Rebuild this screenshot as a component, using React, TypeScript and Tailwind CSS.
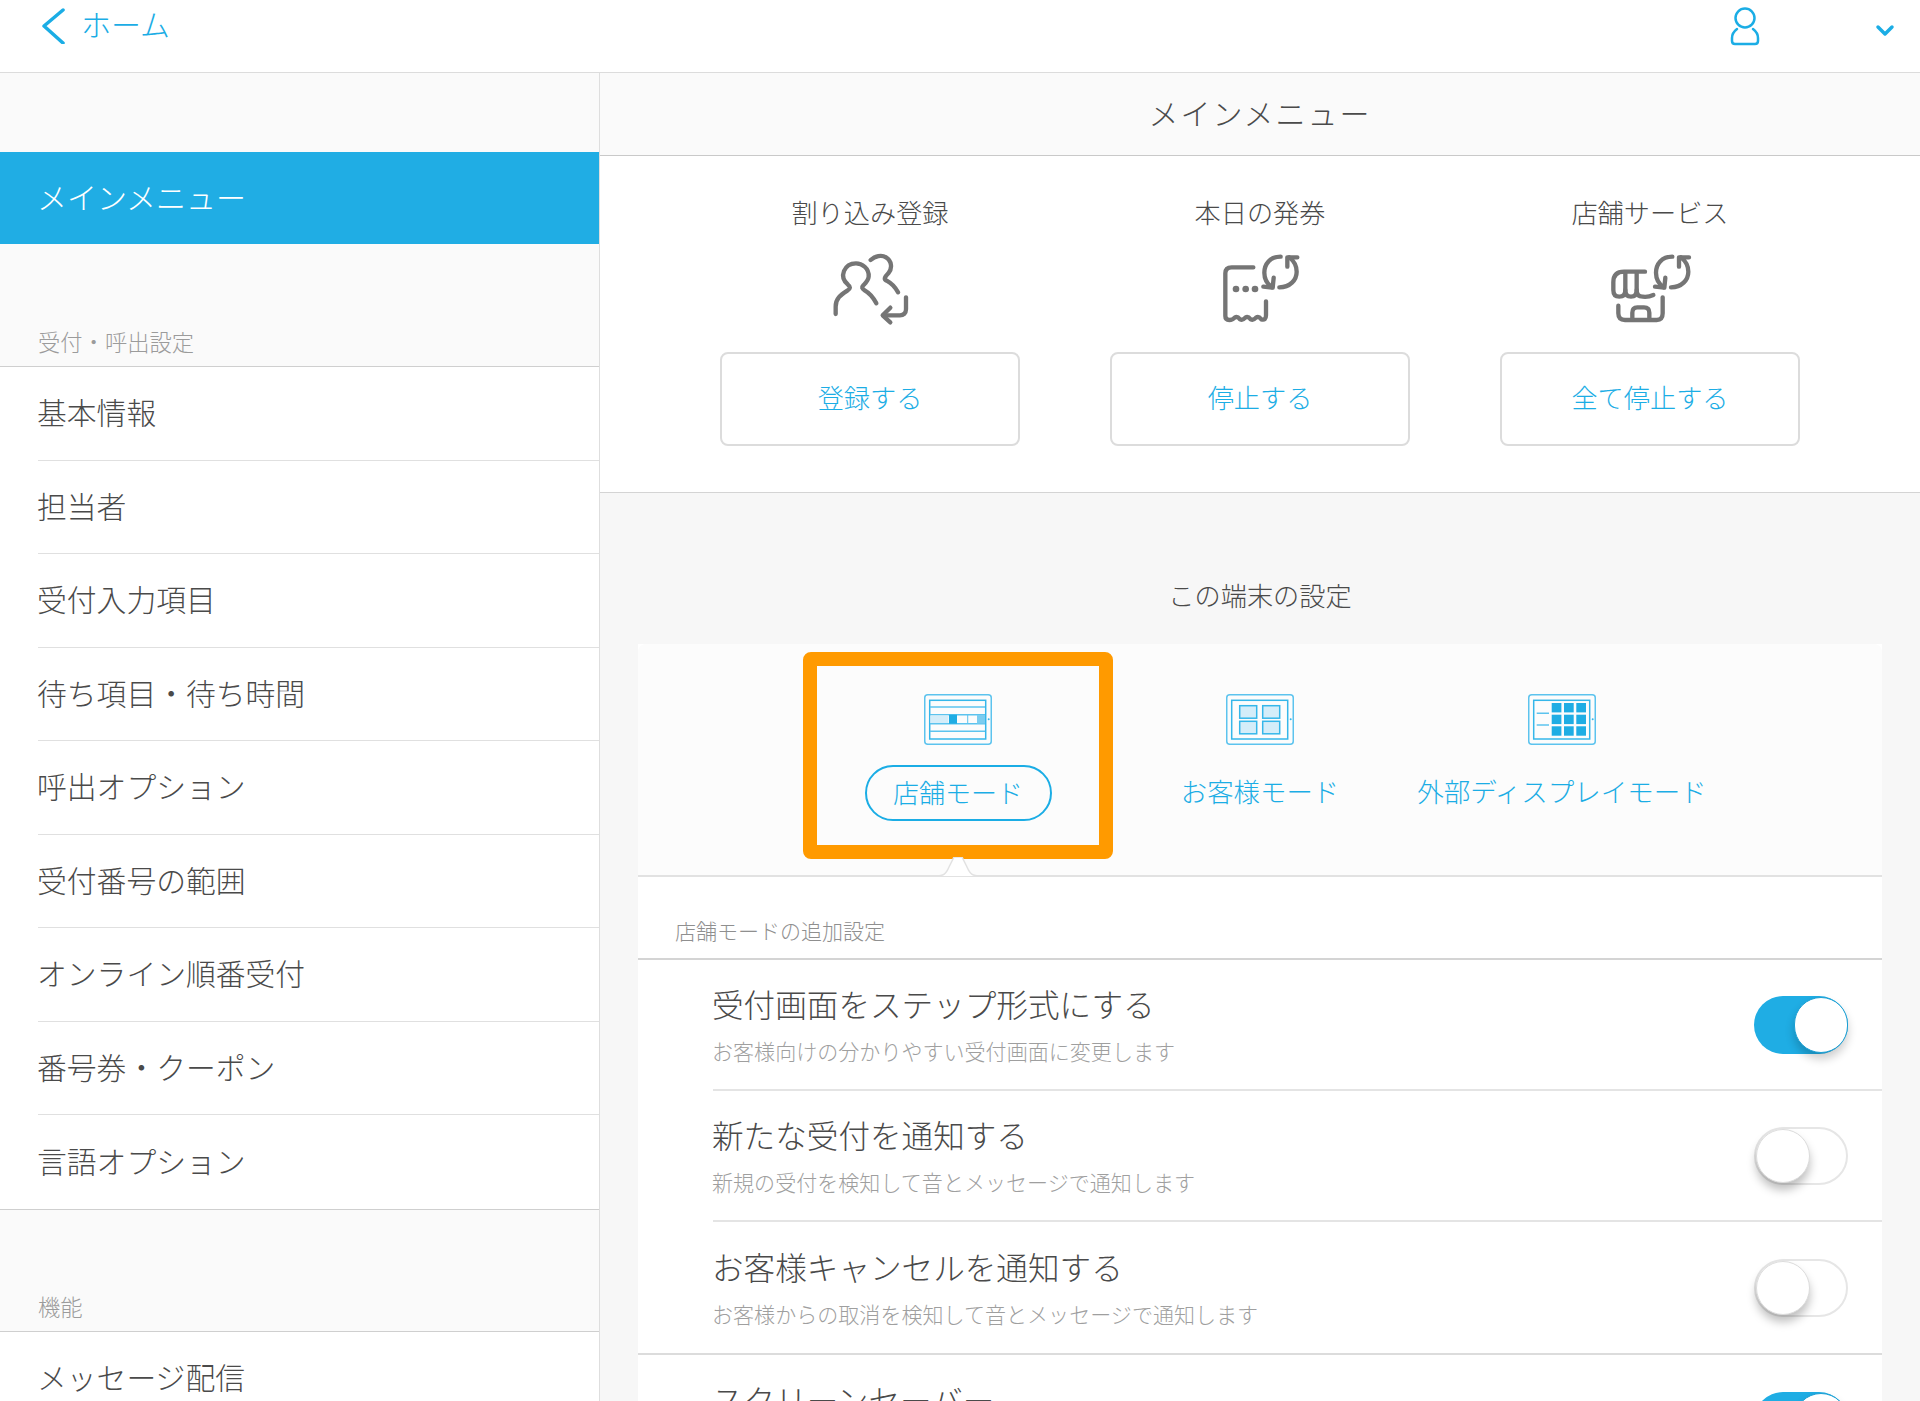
import React from "react";

const sideItems = ["基本情報", "担当者", "受付入力項目", "待ち項目・待ち時間", "呼出オプション", "受付番号の範囲", "オンライン順番受付", "番号券・クーポン", "言語オプション"];

const settings = [
  { title: "受付画面をステップ形式にする", sub: "お客様向けの分かりやすい受付画面に変更します", on: true },
  { title: "新たな受付を通知する", sub: "新規の受付を検知して音とメッセージで通知します", on: false },
  { title: "お客様キャンセルを通知する", sub: "お客様からの取消を検知して音とメッセージで通知します", on: false },
  { title: "スクリーンセーバー", sub: "", on: true },
];

const Refresh = ({ dx = 0 }: { dx?: number }) => (
  <g transform={`translate(${dx} 0)`}>
    <path d="M212 50 C180 50 163 72 163 98 C163 115 172 132 186 142" />
    <path d="M191 113 L188 143 L160 140" />
    <path d="M208 142 C240 142 260 120 260 95 C260 78 252 63 238 52" />
    <path d="M232 80 L232 52 L262 52" />
  </g>
);

const PeopleIcon = () => (
  <svg width="120" height="100" viewBox="-30 0 360 300" fill="none" stroke="#757575" strokeWidth="13" strokeLinecap="round" strokeLinejoin="round">
    <path d="M47 222 V200 C47 175 62 165 82 152 C92 146 92 140 84 134 C70 122 66 108 72 93 C80 74 96 70 108 70 C125 70 148 84 146 110 C145 122 138 128 130 136 C124 142 126 146 134 151 C150 160 160 172 169 190" />
    <path d="M152 60 C165 48 185 44 198 52 C215 62 218 85 205 100 C195 110 190 118 200 122 C215 130 226 142 234 157" />
    <path d="M258 172 V208 C258 220 250 226 240 226 H190" />
    <path d="M211 203 L188 226 L211 247" />
  </svg>
);

const TicketIcon = () => (
  <svg width="120" height="100" viewBox="-30 0 360 300" fill="none" stroke="#757575" strokeWidth="13" strokeLinecap="round" strokeLinejoin="round">
    <path d="M130 82 H65 Q46 82 46 100 V228 Q46 240 58 240 Q68 240 74 233 Q82 228 90 238 Q98 242 106 233 Q114 228 122 238 Q130 242 138 233 Q146 228 154 238 Q168 242 168 226 V184" />
    <circle cx="78" cy="147" r="10" fill="#757575" stroke="none" />
    <circle cx="107" cy="147" r="10" fill="#757575" stroke="none" />
    <circle cx="135" cy="147" r="10" fill="#757575" stroke="none" />
    <Refresh />
  </svg>
);

const StoreIcon = () => (
  <svg width="120" height="100" viewBox="-30 0 360 300" fill="none" stroke="#757575" strokeWidth="13" strokeLinecap="round" strokeLinejoin="round">
    <path d="M135 95 H72 Q40 95 40 127 V150 Q40 170 58 170 Q76 170 76 150 V100" />
    <path d="M76 150 Q76 170 93 170 Q110 170 110 150 V100" />
    <path d="M110 150 Q110 170 128 170 Q145 172 160 165" />
    <path d="M55 197 V220 Q55 240 75 240 H170 Q188 240 188 220 V172" />
    <path d="M97 238 V218 Q97 202 112 202 H132 Q148 202 148 218 V238" />
    <Refresh dx={5} />
  </svg>
);

const Tablet = ({ children }: { children: React.ReactNode }) => (
  <svg width="68" height="51" viewBox="0 0 68 51" fill="none" stroke="#35b7ea" strokeWidth="1.5">
    <rect x="0.75" y="0.75" width="66.5" height="49.5" rx="3" stroke="#5cc3ee" />
    <rect x="5.7" y="6.3" width="56" height="38.7" />
    <circle cx="64.7" cy="25.3" r="1" fill="#35b7ea" stroke="none" />
    {children}
  </svg>
);

const StoreTablet = () => (
  <Tablet>
    <path d="M6 13 H61 M6 20.7 H61 M6 29.7 H61 M6 37.3 H61" stroke="#5cc3ee" />
    <rect x="6.4" y="21.4" width="18" height="7.6" fill="#d4edf9" stroke="none" />
    <rect x="25" y="20.7" width="8" height="9" fill="#1fade4" stroke="none" />
    <rect x="43.2" y="20.7" width="1" height="9" fill="#5cc3ee" stroke="none" />
    <rect x="53" y="21" width="8" height="8.5" fill="#7bcdf0" stroke="none" />
  </Tablet>
);

const GuestTablet = () => (
  <Tablet>
    {[[13.7, 11.7], [36.7, 11.7], [13.7, 27.3], [36.7, 27.3]].map(([x, y]) => (
      <rect key={`${x}-${y}`} x={x} y={y} width={17} height={12.5} fill="#d4edf9" />
    ))}
  </Tablet>
);

const DisplayTablet = () => (
  <Tablet>
    <path d="M8.7 19.3 H21 M8.7 31 H21" stroke="#5cc3ee" />
    {[9, 20.7, 32.3].map((y) =>
      [23.7, 36, 48.3].map((x) => <rect key={`${x}-${y}`} x={x} y={y} width={9.7} height={9.4} fill="#1fade4" stroke="none" />),
    )}
  </Tablet>
);

const Toggle = ({ on }: { on: boolean }) =>
  on ? (
    <div className="flex h-[58px] w-[94px] shrink-0 items-center justify-end rounded-full bg-[#1fade4]">
      <div className="h-[56px] w-[54px] rounded-full border border-[#1a9fd4] bg-white shadow-[0_6px_10px_rgba(0,0,0,0.2)]" />
    </div>
  ) : (
    <div className="flex h-[58px] w-[94px] shrink-0 items-center justify-start rounded-full border-2 border-[#e6e6e6] bg-white">
      <div className="h-[54px] w-[54px] rounded-full border border-[#dcdcdc] bg-white shadow-[0_7px_10px_rgba(0,0,0,0.25)]" />
    </div>
  );

const SectionLabel = ({ children, h }: { children: string; h: string }) => (
  <div className={`flex ${h} items-end border-b border-[#cfcfcf] pb-[9px] pl-[38px] text-[22.3px] leading-[32px] text-[#9b9b9b]`}>{children}</div>
);

const SideItem = ({ children, last }: { children: string; last?: boolean }) => (
  <div className={`ml-[38px] flex h-[93.5px] items-center pb-[3px] -indent-px text-[29.8px] text-[#4a4a4a] ${last ? "" : "border-b border-[#e0e0e0]"}`}>{children}</div>
);

const actions = [
  { label: "割り込み登録", button: "登録する", icon: <PeopleIcon /> },
  { label: "本日の発券", button: "停止する", icon: <TicketIcon /> },
  { label: "店舗サービス", button: "全て停止する", icon: <StoreIcon /> },
];

export default function App() {
  return (
    <div className="h-[1401px] w-[1920px] overflow-hidden bg-white font-['Noto_Sans_CJK_JP','Noto_Sans',sans-serif] font-light">
      {/* Top bar */}
      <header className="flex h-[73px] items-start justify-between border-b border-[#dcdcdc] bg-white text-[#1badE5]">
        <div className="flex items-start pl-[42px] pt-[8px]">
          <svg width="24" height="36" viewBox="0 0 24 36" fill="none" stroke="#1badE5" strokeWidth="3.5" strokeLinecap="round" strokeLinejoin="round">
            <path d="M21 2 L2 18 L21 35" />
          </svg>
          <span className="-mt-[3px] ml-[15px] text-[30px] leading-[36px]">ホーム</span>
        </div>
        <div className="flex items-start pr-[24px] pt-[6px]">
          <svg width="30" height="40" viewBox="0 0 30 40" fill="none" stroke="#1badE5" strokeWidth="2.5" strokeLinecap="round">
            <circle cx="15" cy="12" r="9.5" />
            <path d="M7 23 C3 26 2 29 2 32 V35 Q2 38 5 38 H25 Q28 38 28 35 V32 C28 29 27 26 23 23" />
          </svg>
          <svg className="ml-[114px] mt-[18px]" width="22" height="14" viewBox="0 0 22 14" fill="none" stroke="#1badE5" strokeWidth="3.5" strokeLinecap="round" strokeLinejoin="round">
            <path d="M4 3 L11 10 L18 3" />
          </svg>
        </div>
      </header>

      <div className="flex">
        {/* Sidebar */}
        <aside className="w-[600px] shrink-0 border-r border-[#dedede] bg-[#fafafa]">
          <div className="h-[78.5px]" />
          <div className="flex h-[92px] items-center bg-[#20ade4] pb-[3px] pl-[37px] text-[30px] text-white">メインメニュー</div>
          <SectionLabel h="h-[123.5px]">受付・呼出設定</SectionLabel>
          <div className="border-b border-[#cfcfcf] bg-white">
            {sideItems.map((item, i) => (
              <SideItem key={item} last={i === sideItems.length - 1}>{item}</SideItem>
            ))}
          </div>
          <SectionLabel h="h-[122px]">機能</SectionLabel>
          <div className="bg-white">
            <SideItem last>メッセージ配信</SideItem>
          </div>
        </aside>

        {/* Main */}
        <main className="flex-1 bg-[#f7f7f7]">
          <div className="flex h-[83px] items-center justify-center border-b border-[#c9c9c9] bg-[#fafafa] pb-[4px] text-[30px] tracking-[2px] text-[#4a4a4a]">メインメニュー</div>

          <div className="flex justify-center border-b border-[#d4d4d4] bg-white pb-[46px] pt-[38px]">
            {actions.map((a) => (
              <div key={a.label} className="flex w-[390px] flex-col items-center">
                <div className="text-[26.2px] leading-[36px] text-[#4a4a4a]">{a.label}</div>
                <div className="mt-[10px]">{a.icon}</div>
                <button className="mt-[12px] h-[94px] w-[300px] rounded-[8px] border-2 border-[#dcdcdc] bg-white pb-[2px] text-[26.2px] text-[#1badE5]">{a.button}</button>
              </div>
            ))}
          </div>

          <div className="flex h-[151px] items-end justify-center pb-[31px] text-[26.2px] leading-[36px] text-[#4a4a4a]">この端末の設定</div>

          <div className="mx-[38px] bg-white">
            {/* Mode tabs */}
            <div className="relative flex h-[233px] justify-center rounded-t-[8px] border-b-2 border-[#e2e2e2] bg-[#fcfcfc]">
              <div className="relative flex w-[302px] flex-col items-center pt-[50px]">
                <StoreTablet />
                <div className="mt-[20px] flex h-[56px] w-[187px] items-center justify-center rounded-full border-2 border-[#1badE5] pb-[4px] text-[26px] text-[#1badE5]">店舗モード</div>
                <div className="absolute left-[-4px] top-[8px] h-[207px] w-[310px] rounded-[8px] border-[14px] border-[#ff9a00]" />
                <svg className="absolute bottom-[-2px] left-[128px]" width="46" height="20" viewBox="0 0 46 20" fill="#fff" stroke="#e2e2e2" strokeWidth="1.5">
                  <path d="M0 19 C9 19 11 17 14 10 L19 0 H27 L32 10 C35 17 37 19 46 19" />
                </svg>
              </div>
              <div className="flex w-[302px] flex-col items-center pt-[50px]">
                <GuestTablet />
                <div className="mt-[20px] flex h-[56px] items-center pb-[4px] text-[26.4px] text-[#1badE5]">お客様モード</div>
              </div>
              <div className="flex w-[302px] flex-col items-center pt-[50px]">
                <DisplayTablet />
                <div className="mt-[20px] flex h-[56px] items-center whitespace-nowrap pb-[4px] text-[26.5px] text-[#1badE5]">外部ディスプレイモード</div>
              </div>
            </div>

            <div className="flex h-[83px] items-end border-b-2 border-[#d4d4d4] pb-[13px] pl-[37px] text-[21px] leading-[30px] text-[#8f8f8f]">店舗モードの追加設定</div>

            {settings.map((s, i) => (
              <div key={s.title} className={i === 2 ? "border-b-2 border-[#dcdcdc] pl-[75px]" : "pl-[75px]"}>
                <div className={`flex h-[131px] items-center justify-between pr-[34px] ${i < 2 ? "border-b-2 border-[#e4e4e4]" : ""}`}>
                  <div className="-ml-px">
                    <div className="text-[31.6px] leading-[40px] text-[#4a4a4a]">{s.title}</div>
                    <div className="mt-[13px] h-[30px] text-[21.05px] leading-[30px] text-[#9f9f9f]">{s.sub}</div>
                  </div>
                  <Toggle on={s.on} />
                </div>
              </div>
            ))}
          </div>
        </main>
      </div>
    </div>
  );
}
